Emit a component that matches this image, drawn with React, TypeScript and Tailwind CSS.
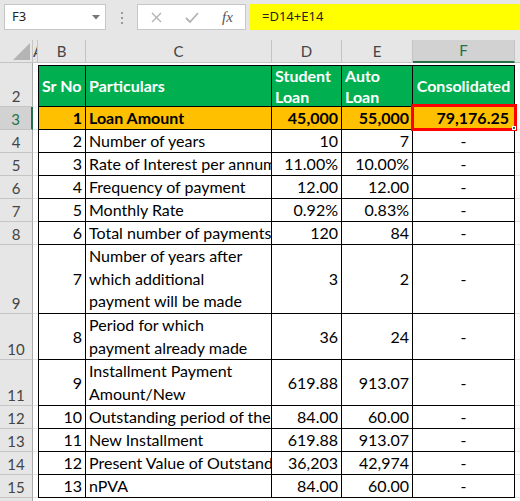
type Row = {
  n: number
  h: string
  sr: string
  label: string | string[]
  d: string
  e: string
  f: string
  hl?: boolean
}

const rows: Row[] = [
  { n: 3, h: 'h-[23px]', sr: '1', label: 'Loan Amount', d: '45,000', e: '55,000', f: '79,176.25', hl: true },
  { n: 4, h: 'h-[23px]', sr: '2', label: 'Number of years', d: '10', e: '7', f: '-' },
  { n: 5, h: 'h-[23px]', sr: '3', label: 'Rate of Interest per annum', d: '11.00%', e: '10.00%', f: '-' },
  { n: 6, h: 'h-[23px]', sr: '4', label: 'Frequency of payment', d: '12.00', e: '12.00', f: '-' },
  { n: 7, h: 'h-[23px]', sr: '5', label: 'Monthly Rate', d: '0.92%', e: '0.83%', f: '-' },
  { n: 8, h: 'h-[23px]', sr: '6', label: 'Total number of payments', d: '120', e: '84', f: '-' },
  {
    n: 9,
    h: 'h-[69px]',
    sr: '7',
    label: ['Number of years after', 'which additional', 'payment will be made'],
    d: '3',
    e: '2',
    f: '-',
  },
  { n: 10, h: 'h-[46px]', sr: '8', label: ['Period for which', 'payment already made'], d: '36', e: '24', f: '-' },
  { n: 11, h: 'h-[46px]', sr: '9', label: ['Installment Payment', 'Amount/New'], d: '619.88', e: '913.07', f: '-' },
  { n: 12, h: 'h-[23px]', sr: '10', label: 'Outstanding period of the loan', d: '84.00', e: '60.00', f: '-' },
  { n: 13, h: 'h-[23px]', sr: '11', label: 'New Installment', d: '619.88', e: '913.07', f: '-' },
  { n: 14, h: 'h-[23px]', sr: '12', label: 'Present Value of Outstanding', d: '36,203', e: '42,974', f: '-' },
  { n: 15, h: 'h-[23px]', sr: '13', label: 'nPVA', d: '84.00', e: '60.00', f: '-' },
]

const cell = 'shrink-0 border-r border-b border-black overflow-hidden'

function RowHead({ n, active }: { n?: number; active?: boolean }) {
  return (
    <div
      className={`w-[33px] shrink-0 flex items-end justify-center pb-[1px] text-[15px] leading-[18px] border-b border-[#c4c4c4] ${
        active
          ? 'bg-[#d2d2d2] text-[#217346] border-r-2 border-r-[#217346]'
          : 'bg-[#e6e6e6] text-[#444] border-r border-r-[#ababab]'
      }`}
    >
      {n}
    </div>
  )
}

function FormulaBar() {
  return (
    <div className="h-[40px] bg-[#e6e6e6] flex items-start pt-[4px] pl-[4px]">
      <div className="w-[102px] h-[26px] bg-white border border-[#c6c6c6] flex items-center justify-between pl-[7px] pr-[5px] text-[13px] text-[#222] font-['Noto_Sans',sans-serif]">
        F3
        <svg width="8" height="5" viewBox="0 0 8 5">
          <path d="M0 0h8L4 4.5z" fill="#777" />
        </svg>
      </div>
      <div className="w-[31px] flex flex-col items-center gap-[3px] pt-[8px]">
        <span className="w-[2px] h-[2px] bg-[#9a9a9a]" />
        <span className="w-[2px] h-[2px] bg-[#9a9a9a]" />
        <span className="w-[2px] h-[2px] bg-[#9a9a9a]" />
      </div>
      <div className="w-[109px] h-[26px] bg-white border border-[#c6c6c6] flex items-center pl-[13px]">
        <svg width="11" height="11" viewBox="0 0 11 11">
          <path d="M1 1l9 9M10 1l-9 9" stroke="#b3b3b3" strokeWidth="1.4" />
        </svg>
        <svg className="ml-[23px]" width="14" height="11" viewBox="0 0 14 11">
          <path d="M1 6l4 4L13 1" stroke="#b3b3b3" strokeWidth="1.8" fill="none" />
        </svg>
        <span className="ml-[23px] text-[15px] italic text-[#555] font-['Liberation_Serif',serif]">fx</span>
      </div>
      <div className="ml-[3px] flex-1 h-[26px] bg-[#ffff00] flex items-center pl-[13px] text-[13px] text-[#222] font-['Noto_Sans',sans-serif]">
        =D14+E14
      </div>
    </div>
  )
}

function ColHeads() {
  const hd = 'shrink-0 h-[23px] flex items-center justify-center border-r border-b border-[#c4c4c4] bg-[#e6e6e6] text-[#444] text-[15px]'
  return (
    <div className="flex">
      <div className={`${hd} w-[33px] items-end justify-end pr-[2px] pb-[2px]`}>
        <svg width="17" height="17" viewBox="0 0 17 17">
          <path d="M17 0V17H0z" fill="#b4b4b4" />
        </svg>
      </div>
      <div className={`${hd} w-[5px] justify-start overflow-hidden`}>A</div>
      <div className={`${hd} w-[48px]`}>B</div>
      <div className={`${hd} w-[186px]`}>C</div>
      <div className={`${hd} w-[70px]`}>D</div>
      <div className={`${hd} w-[71px]`}>E</div>
      <div className="shrink-0 w-[102px] h-[23px] flex items-center justify-center bg-[#d2d2d2] text-[#217346] text-[15px] border-r border-[#c4c4c4] border-b-2 border-b-[#217346]">
        F
      </div>
      <div className={`${hd} w-[5px] border-r-0`} />
    </div>
  )
}

export default function App() {
  return (
    <div className="w-[520px] h-[501px] overflow-hidden bg-white font-['Lato',sans-serif] text-black">
      <FormulaBar />
      <ColHeads />

      {/* row 1 is squashed */}
      <div className="flex h-[2px]">
        <div className="w-[33px] shrink-0 bg-[#e6e6e6] border-r border-[#ababab]" />
      </div>

      {/* header row */}
      <div className="flex h-[42px]">
        <RowHead n={2} />
        <div className="w-[5px] shrink-0" />
        <div className="flex bg-[#00b050] text-white font-bold text-[16px] border-t border-black">
          <div className={`${cell} w-[48px] border-l flex items-center pl-[3px]`}>Sr No</div>
          <div className={`${cell} w-[186px] flex items-center pl-[3px]`}>Particulars</div>
          <div className={`${cell} w-[70px] flex flex-col justify-center pl-[3px] leading-[21px]`}>
            <span>Student</span>
            <span>Loan</span>
          </div>
          <div className={`${cell} w-[71px] flex flex-col justify-center pl-[3px] leading-[21px]`}>
            <span>Auto</span>
            <span>Loan</span>
          </div>
          <div className={`${cell} w-[102px] flex items-center justify-center`}>Consolidated</div>
        </div>
      </div>

      {rows.map((r) => (
        <div key={r.n} className={`flex ${r.h}`}>
          <RowHead n={r.n} active={r.hl} />
          <div className="w-[5px] shrink-0 border-b border-[#e1e1e1]" />
          <div className={`flex text-[16px] ${r.hl ? 'bg-[#ffc000] font-bold' : ''}`}>
            <div className={`${cell} w-[48px] border-l flex items-center justify-end pr-[3px]`}>{r.sr}</div>
            <div className={`${cell} w-[186px] flex flex-col justify-center pl-[3px] whitespace-nowrap leading-[22.5px]`}>
              {Array.isArray(r.label) ? r.label.map((l) => <span key={l}>{l}</span>) : <span>{r.label}</span>}
            </div>
            <div className={`${cell} w-[70px] flex items-center justify-end pr-[3px]`}>{r.d}</div>
            <div className={`${cell} w-[71px] flex items-center justify-end pr-[3px]`}>{r.e}</div>
            <div className={`${cell} w-[102px] flex items-center ${r.hl ? 'justify-end pr-[5px] relative overflow-visible' : 'justify-center'}`}>
              {r.f}
              {r.hl && (
                <>
                  <div className="absolute -top-[3px] -left-[2px] -right-[3px] -bottom-[2px] border-[3px] border-[#ff0000]" />
                  <div className="absolute -right-[2px] -bottom-[1px] w-[4px] h-[4px] bg-[#217346] border border-white" />
                </>
              )}
            </div>
          </div>
          <div className="w-[5px] shrink-0 border-b border-[#e1e1e1]" />
        </div>
      ))}

      <div className="flex h-[10px]">
        <RowHead />
      </div>
    </div>
  )
}
